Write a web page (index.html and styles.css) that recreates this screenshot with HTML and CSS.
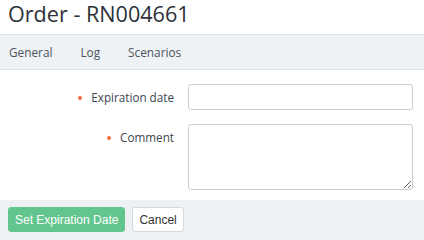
FILE: index.html
```html
<!DOCTYPE html>
<html lang="en">
<head>
  <meta charset="UTF-8">
  <title>Order - RN004661</title>
  <link rel="stylesheet" href="styles.css">
</head>
<body>
  <h1 class="title">Order - RN004661</h1>
  <nav class="tabs">
    <a href="#" class="tab">General</a>
    <a href="#" class="tab">Log</a>
    <a href="#" class="tab">Scenarios</a>
  </nav>
  <form class="form">
    <div class="row">
      <label class="label required" for="exp">Expiration date</label>
      <input class="input" type="text" id="exp" name="exp">
    </div>
    <div class="row">
      <label class="label required" for="comment">Comment</label>
      <textarea class="input area" id="comment" name="comment"></textarea>
    </div>
  </form>
  <div class="footer">
    <button type="button" class="btn btn-green">Set Expiration Date</button>
    <button type="button" class="btn">Cancel</button>
  </div>
</body>
</html>
```

FILE: styles.css
```css
body {
  margin: 0;
  font-family: "Open Sans", sans-serif;
  color: #333;
  background: #fff;
  overflow: hidden;
}
.title {
  margin: 0;
  padding: 0 8px;
  height: 34px;
  font-size: 21.6px;
  font-weight: normal;
  line-height: 28px;
  color: #2d3238;
}
.tabs {
  display: flex;
  height: 34px;
  align-items: center;
  gap: 28px;
  padding: 0 9px;
  background: #eef2f5;
  border-top: 1px solid #dde1e5;
  border-bottom: 1px solid #dde1e5;
}
.tab {
  font-size: 11.8px;
  color: #4b5560;
  text-decoration: none;
}
.form {
  padding: 14px 11px 10px 0;
}
.row {
  display: flex;
  align-items: flex-start;
}
.row + .row {
  margin-top: 14px;
}
.label {
  width: 174px;
  flex: none;
  text-align: right;
  font-size: 11.7px;
  line-height: 26px;
  color: #3c4650;
  margin-right: 14px;
}
.required::before {
  content: "";
  display: inline-block;
  width: 4px;
  height: 4px;
  border-radius: 50%;
  background: #f26b3a;
  margin-right: 9px;
  vertical-align: middle;
  position: relative;
  top: -1px;
}
.input {
  flex: 1;
  height: 26px;
  box-sizing: border-box;
  border: 1px solid #c8cdd2;
  border-radius: 3px;
  font-family: inherit;
  font-size: 12px;
}
.area {
  height: 66px;
}
.footer {
  display: flex;
  gap: 7px;
  background: #eef1f4;
  padding: 7px 8px;
  height: 40px;
  box-sizing: border-box;
}
.btn {
  height: 25px;
  padding: 0 6px;
  font-family: "Liberation Sans", Arial, sans-serif;
  font-size: 12px;
  color: #333;
  background: #fff;
  border: 1px solid #d5d9dd;
  border-radius: 3px;
}
.btn-green {
  background: #62c58e;
  border-color: #62c58e;
  color: #fff;
}
```
